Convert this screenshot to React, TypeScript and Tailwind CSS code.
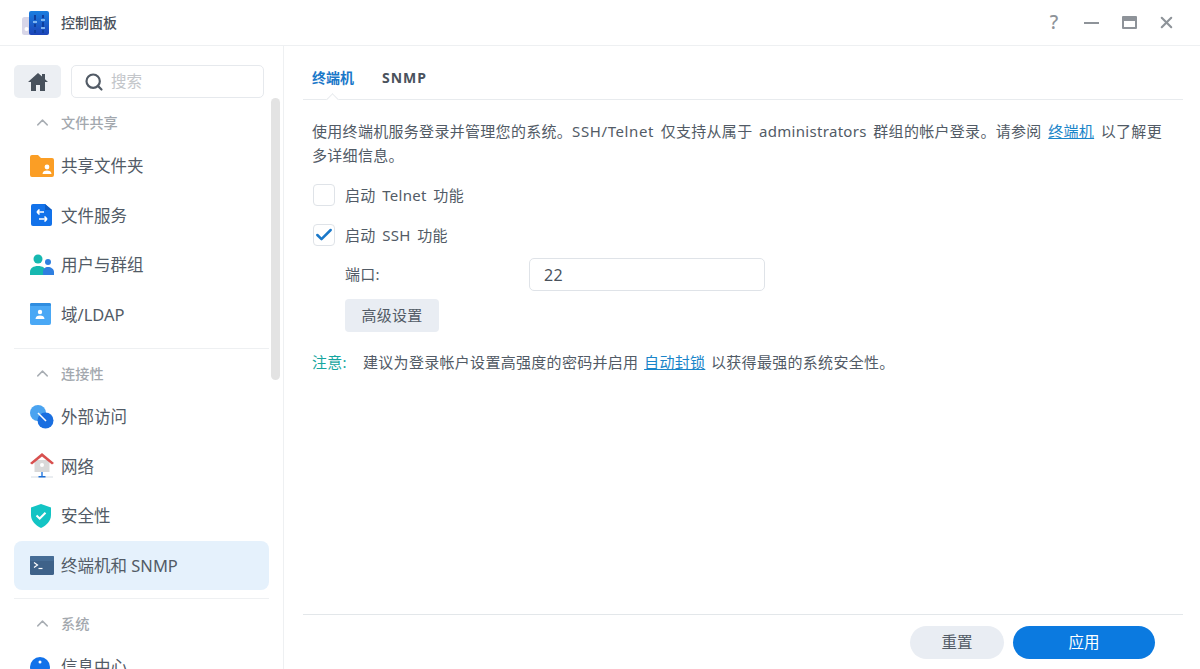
import { ChevronUp, Search, X, Check } from 'lucide-react';
import type { ReactNode } from 'react';

function AppIcon() {
  return (
    <svg width="28" height="26" viewBox="0 0 28 26">
      <defs>
        <linearGradient id="panel" x1="0" y1="0" x2="0" y2="1">
          <stop offset="0" stopColor="#1a7ee0" />
          <stop offset="1" stopColor="#1c44b8" />
        </linearGradient>
      </defs>
      <rect x="0" y="7" width="10" height="18" rx="2.500" fill="#d8d6e8" />
      <circle cx="4.500" cy="19" r="2" fill="#fff" />
      <rect x="7" y="1" width="20" height="24" rx="2" fill="url(#panel)" />
      <path d="M13 5v5M13 14v3M13 20v3M21 5v3M21 12v5M21 20v3" stroke="#0f3f9c" strokeWidth="2" />
      <path d="M11 12h4M19 10h4M19 18h4" stroke="#9fd0fa" strokeWidth="1.600" />
    </svg>
  );
}

function HomeIcon() {
  return (
    <svg width="20" height="18" viewBox="0 0 20 18">
      <path d="M10 0L0 9h3v9h5v-6h4v6h5V9h3l-3-2.700V1h-3v2.600z" fill="#48515c" />
    </svg>
  );
}

function FolderIcon() {
  return (
    <svg width="24" height="22" viewBox="0 0 24 22">
      <path d="M0 2a2 2 0 0 1 2-2h6l3 3h11a2 2 0 0 1 2 2v15a2 2 0 0 1-2 2H2a2 2 0 0 1-2-2z" fill="#fb9e25" />
      <circle cx="17" cy="12" r="2.400" fill="#fff" />
      <path d="M12.500 19c0-2.500 2-3.500 4.500-3.500s4.500 1 4.500 3.500z" fill="#fff" />
    </svg>
  );
}

function FileServiceIcon() {
  return (
    <svg width="24" height="24" viewBox="0 0 24 24">
      <path d="M1 3a2 2 0 0 1 2-2h12l7 6v14a2 2 0 0 1-2 2H3a2 2 0 0 1-2-2z" fill="#1272ea" />
      <path d="M15 1l7 6h-7z" fill="#0d5cc4" />
      <path d="M14 9H7m0 0l2.500-2.500M7 9l2.500 2.500M9 16h8m0 0l-2.500-2.500M17 16l-2.500 2.500" stroke="#fff" strokeWidth="1.600" fill="none" />
    </svg>
  );
}

function UsersIcon() {
  return (
    <svg width="24" height="22" viewBox="0 0 24 22">
      <circle cx="8" cy="5" r="4.500" fill="#16b8b0" />
      <path d="M0 21v-3c0-4 3.500-6 8-6s8 2 8 6v3z" fill="#16b8b0" />
      <circle cx="18" cy="8" r="3" fill="#2f7fe0" />
      <path d="M13 21v-3c0-3 2-5 5-5s6 2 6 5v3z" fill="#2f7fe0" />
    </svg>
  );
}

function LdapIcon() {
  return (
    <svg width="22" height="24" viewBox="0 0 22 24">
      <rect x="0" y="1" width="21" height="22" rx="2" fill="#4aa8f5" />
      <rect x="0" y="1" width="21" height="3" rx="1.500" fill="#2f8de0" />
      <circle cx="10" cy="10" r="2.200" fill="#fff" />
      <path d="M5.500 17c0-2.500 2-3.500 4.500-3.500s4.500 1 4.500 3.500z" fill="#fff" />
    </svg>
  );
}

function ExternalIcon() {
  return (
    <svg width="24" height="24" viewBox="0 0 24 24">
      <circle cx="8" cy="8" r="8" fill="#4aa3f0" />
      <circle cx="15.500" cy="15.500" r="8" fill="#1a6fe0" />
      <path d="M8 8l8 8" stroke="#fff" strokeWidth="1.600" />
    </svg>
  );
}

function NetworkIcon() {
  return (
    <svg width="24" height="26" viewBox="0 0 24 26">
      <rect x="4.500" y="7" width="15" height="12" fill="#d9d9d9" />
      <path d="M0 10L12 0l12 10-2 1.500L12 3.500 2 11.500z" fill="#d8504f" />
      <circle cx="12" cy="12" r="2" fill="#fff" />
      <path d="M1 24h22" stroke="#d4dbe2" strokeWidth="1" />
      <path d="M12 19v4" stroke="#2f7fe0" strokeWidth="1.500" />
      <path d="M8.500 24.500h7v-1.500h-7z" fill="#1f6fd4" />
    </svg>
  );
}

function ShieldIcon() {
  return (
    <svg width="22" height="24" viewBox="0 0 22 24">
      <path d="M11 0l10 3.500V11c0 6-4.500 10.500-10 13C5.500 21.500 1 17 1 11V3.500z" fill="#13c4c4" />
      <path d="M6.500 11.500l3.200 3 5.800-5.800" stroke="#fff" strokeWidth="2" fill="none" />
    </svg>
  );
}

function TerminalIcon() {
  return (
    <svg width="24" height="19" viewBox="0 0 24 19">
      <rect width="24" height="19" rx="1.500" fill="#3e6289" />
      <rect width="24" height="5" rx="1" fill="#466d96" />
      <path d="M4 6.500l3.500 2.500L4 11.500" stroke="#fff" strokeWidth="1.200" fill="none" />
      <path d="M8.500 12.500h4" stroke="#fff" strokeWidth="1.200" />
    </svg>
  );
}

function InfoIcon() {
  return (
    <svg width="20" height="20" viewBox="0 0 20 20">
      <circle cx="10" cy="10" r="10" fill="#1272ea" />
      <circle cx="10" cy="5" r="1.500" fill="#fff" />
    </svg>
  );
}

function NavItem({ icon, label, active }: { icon: ReactNode; label: string; active?: boolean }) {
  return (
    <div className={`flex h-[49.500px] shrink-0 items-center rounded-lg pl-[16px] text-[16.500px] text-[#525b66] ${active ? 'bg-[#e5f1fc]' : ''}`}>
      <span className="flex w-[31px] justify-start">{icon}</span>
      <span className="pt-[2px]">{label}</span>
    </div>
  );
}

function SectionTitle({ label }: { label: string }) {
  return (
    <div className="mt-[6px] flex h-[37px] shrink-0 items-center pl-[19px] text-[14.200px] font-medium text-[#a3a8ae]">
      <ChevronUp size={19} strokeWidth={1.800} className="mr-[9px] text-[#a8adb3]" />
      <span>{label}</span>
    </div>
  );
}

export default function App() {
  return (
    <div
      className="flex h-[669px] w-[1200px] flex-col overflow-hidden bg-white"
      style={{ fontFamily: '"Noto Sans", "Noto Sans CJK SC", sans-serif' }}
    >
      <header className="flex h-[46px] shrink-0 items-center border-b border-[#eef0f2] pl-[22px] pr-[24px]">
        <AppIcon />
        <span className="ml-[11px] text-[14px] font-medium text-[#4a525c]">控制面板</span>
        <div className="ml-auto flex items-center text-[#8e9399]">
          <span className="mr-[23px] flex w-[14px] justify-center text-[19px] font-medium leading-none">?</span>
          <span className="mr-[23px] block h-[2px] w-[15px] bg-[#8e9399]" />
          <span className="mr-[20px] flex h-[13px] w-[15px] flex-col rounded-[1px] border-2 border-[#8e9399]">
            <span className="h-[3px] bg-[#8e9399]" />
          </span>
          <X size={19} strokeWidth={2.600} />
        </div>
      </header>

      <div className="flex min-h-0 flex-1">
        <aside className="relative flex w-[284px] shrink-0 flex-col overflow-hidden border-r border-[#eef0f2] pl-[14px] pr-[15px] pt-[19px]">
          <div className="flex w-[250px] shrink-0 gap-[10px]">
            <button className="flex h-[33px] w-[47px] items-center justify-center rounded-[5px] bg-[#eceff3]">
              <HomeIcon />
            </button>
            <div className="flex h-[33px] flex-1 items-center rounded-[5px] border border-[#e6e9ed] pl-[12px] text-[15.500px] text-[#c3c6ca]">
              <Search size={20} strokeWidth={2.600} className="mr-[7px] text-[#525b66]" />
              搜索
            </div>
          </div>
          <div className="flex w-[255px] flex-col">
            <SectionTitle label="文件共享" />
            <NavItem icon={<FolderIcon />} label="共享文件夹" />
            <NavItem icon={<FileServiceIcon />} label="文件服务" />
            <NavItem icon={<UsersIcon />} label="用户与群组" />
            <NavItem icon={<LdapIcon />} label="域/LDAP" />
            <div className="mt-[9px] border-t border-[#eef0f2]" />
            <SectionTitle label="连接性" />
            <NavItem icon={<ExternalIcon />} label="外部访问" />
            <NavItem icon={<NetworkIcon />} label="网络" />
            <NavItem icon={<ShieldIcon />} label="安全性" />
            <NavItem icon={<TerminalIcon />} label="终端机和 SNMP" active />
            <div className="mt-[8px] border-t border-[#eef0f2]" />
            <SectionTitle label="系统" />
            <NavItem icon={<InfoIcon />} label="信息中心" />
          </div>
          <div className="absolute left-[271px] top-[52px] h-[282px] w-[9px] rounded-full bg-[#e3e3e3]" />
        </aside>

        <main className="flex min-w-0 flex-1 flex-col pl-[19px] pr-[17px]">
          <div className="relative flex h-[54px] shrink-0 items-center gap-[28px] border-b border-[#e8ebee] pl-[9px] pt-[10px] text-[14px] font-bold">
            <span className="text-[#1a78c9]">终端机</span>
            <span className="tracking-[1px] text-[#4a525c]">SNMP</span>
            <span className="absolute bottom-[-5px] left-[25px] h-[9px] w-[9px] rotate-45 border-l border-t border-[#e8ebee] bg-white" />
          </div>

          <div className="flex flex-1 flex-col pl-[9px] pt-[19px] text-[15px] tracking-[0.3px] text-[#525b66] [word-spacing:2.400px]">
            <div className="whitespace-nowrap leading-[24px]">
              使用终端机服务登录并管理您的系统。<span className="tracking-[0.6px]">SSH/Telnet</span> 仅支持从属于 administrators 群组的帐户登录。请参阅{' '}
              <a className="text-[#1a85c9] underline">终端机</a> 以了解更
            </div>
            <div className="leading-[24px]">多详细信息。</div>
            <label className="ml-[1px] mt-[16px] flex h-[24px] items-center gap-[10px]">
              <span className="h-[22px] w-[22px] rounded-[4px] border border-[#dfe3e8]" />
              <span>启动 Telnet 功能</span>
            </label>
            <label className="ml-[1px] mt-[16px] flex h-[24px] items-center gap-[10px]">
              <span className="flex h-[22px] w-[22px] items-center justify-center rounded-[4px] border border-[#dfe3e8] text-[#1a78c9]">
                <Check size={20} strokeWidth={3} />
              </span>
              <span>启动 SSH 功能</span>
            </label>
            <div className="mt-[11px] flex h-[33px] items-center pl-[33px]">
              <span className="w-[184px]">端口:</span>
              <div className="flex h-[33px] w-[236px] items-center rounded-[5px] border border-[#dfe3e8] pl-[14px] text-[16px] text-[#4a525c]">22</div>
            </div>
            <button className="ml-[33px] mt-[8px] h-[33px] w-[94px] rounded-[4px] bg-[#e9edf3] text-[15px] text-[#525b66]">高级设置</button>
            <p className="mt-[18px] flex h-[24px] items-center whitespace-pre [word-spacing:1.500px]">
              <span className="w-[33px] text-[#16a6a0]">注意:</span>
              <span className="ml-[18px]">建议为登录帐户设置高强度的密码并启用 </span>
              <a className="text-[#1a85c9] underline">自动封锁</a>
              <span> 以获得最强的系统安全性。</span>
            </p>
          </div>

          <footer className="flex h-[55px] shrink-0 items-start justify-end gap-[9px] border-t border-[#e3e7ea] pr-[28px] pt-[11px] text-[15.500px]">
            <button className="h-[33px] w-[94px] rounded-full bg-[#e9edf3] text-[#525b66]">重置</button>
            <button className="h-[33px] w-[142px] rounded-full bg-[#0b7ae0] text-white">应用</button>
          </footer>
        </main>
      </div>
    </div>
  );
}
